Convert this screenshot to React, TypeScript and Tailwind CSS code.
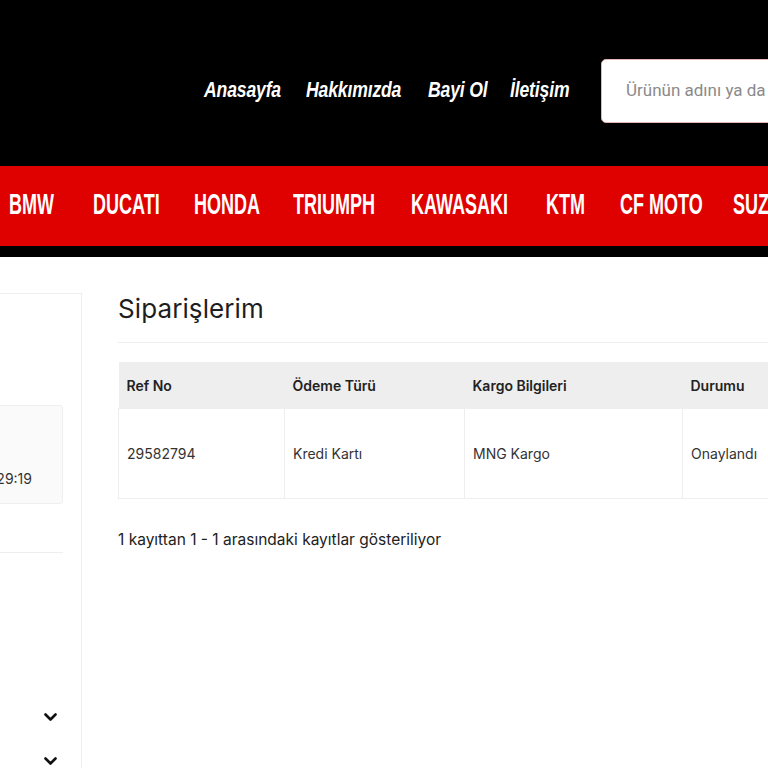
import React from "react";

const topNav = [
  { t: "Anasayfa", w: "w-[102px]" },
  { t: "Hakkımızda", w: "w-[122px]" },
  { t: "Bayi Ol", w: "w-[82px]" },
  { t: "İletişim", w: "w-[91px]" },
];

const brands = [
  { t: "BMW", w: "w-[84px]" },
  { t: "DUCATI", w: "w-[101px]" },
  { t: "HONDA", w: "w-[99px]" },
  { t: "TRIUMPH", w: "w-[118px]" },
  { t: "KAWASAKI", w: "w-[135px]" },
  { t: "KTM", w: "w-[74px]" },
  { t: "CF MOTO", w: "w-[113px]" },
  { t: "SUZUKI", w: "w-[110px]" },
];

function Chevron() {
  return (
    <svg width="13" height="9" viewBox="0 0 13 9" fill="none">
      <path d="M1.5 1.5 L6.5 6.5 L11.5 1.5" stroke="#111" strokeWidth="2.6" strokeLinecap="round" strokeLinejoin="round" />
    </svg>
  );
}

export default function App() {
  return (
    <div className="w-[768px] h-[768px] overflow-hidden bg-white font-['Inter','Liberation_Sans',sans-serif]">
      <div className="w-[1400px]">
        {/* top header */}
        <div className="h-[166px] bg-black pl-[204px] pt-[59px]">
          <div className="flex items-center h-[64px]">
            <nav className="flex items-center">
              {topNav.map((n) => (
                <div key={n.t} className={`${n.w} shrink-0`}>
                  <span className="inline-block origin-left scale-x-[0.8] text-white italic font-bold text-[22px] leading-none font-['Liberation_Sans',sans-serif] tracking-[-0.2px]">
                    {n.t}
                  </span>
                </div>
              ))}
            </nav>
            <div className="h-[64px] w-[420px] bg-white rounded-[5px] border border-[#e7b3b3] flex items-center pl-[24px]">
              <span className="text-[17px] text-[#8a8a8a] font-['Roboto','Liberation_Sans',sans-serif] whitespace-nowrap">
                Ürünün adını ya da kodunu yazınız
              </span>
            </div>
          </div>
        </div>
        {/* brand bar */}
        <div className="h-[80px] bg-[#df0000] flex items-center pl-[9px] pb-[3px]">
          {brands.map((b) => (
            <div key={b.t} className={`${b.w} shrink-0`}>
              <span className="inline-block origin-left scale-x-[0.6] text-white font-bold text-[30px] leading-none font-['Liberation_Sans',sans-serif] whitespace-nowrap">
                {b.t}
              </span>
            </div>
          ))}
        </div>
        <div className="h-[11px] bg-black" />

        {/* content */}
        <div className="flex pt-[36px] gap-[36px]">
          {/* sidebar */}
          <aside className="-ml-[200px] w-[282px] h-[520px] shrink-0 border-t border-r border-[#eeeeee] pr-[18px] flex flex-col">
            <div className="h-[111px]" />
            <div className="h-[99px] bg-[#fafafa] border border-[#efefef] rounded-[3px] flex items-end justify-end pb-[14px] pr-[30px]">
              <span className="text-[14px] text-[#333]">29:19</span>
            </div>
            <div className="h-[48px]" />
            <div className="h-px bg-[#eeeeee]" />
            <div className="h-[160px]" />
            <div className="flex justify-end pr-[6px]">
              <Chevron />
            </div>
            <div className="h-[35px]" />
            <div className="flex justify-end pr-[6px]">
              <Chevron />
            </div>
          </aside>

          {/* main */}
          <main className="w-[1000px] shrink-0">
            <h1 className="text-[26px] leading-[32px] text-[#1e1e1e] font-normal tracking-[0.1px]">Siparişlerim</h1>
            <div className="h-px bg-[#eeeeee] mt-[17px]" />
            <table className="mt-[19px] border-collapse text-[14px]">
              <thead>
                <tr className="bg-[#eeeeee] h-[46px]">
                  <th className="w-[166px] text-left font-semibold text-[#222] px-[8px] pt-[2px]">Ref No</th>
                  <th className="w-[180px] text-left font-semibold text-[#222] px-[8px] pt-[2px]">Ödeme Türü</th>
                  <th className="w-[218px] text-left font-semibold text-[#222] px-[8px] pt-[2px]">Kargo Bilgileri</th>
                  <th className="w-[200px] text-left font-semibold text-[#222] px-[8px] pt-[2px]">Durumu</th>
                </tr>
              </thead>
              <tbody>
                <tr className="h-[90px]">
                  <td className="border border-[#eeeeee] px-[8px] text-[#333]">29582794</td>
                  <td className="border border-[#eeeeee] px-[8px] text-[#333]">Kredi Kartı</td>
                  <td className="border border-[#eeeeee] px-[8px] text-[#333]">MNG Kargo</td>
                  <td className="border border-[#eeeeee] px-[8px] text-[#333]">Onaylandı</td>
                </tr>
              </tbody>
            </table>
            <p className="mt-[29px] text-[15.5px] text-[#222]">1 kayıttan 1 - 1 arasındaki kayıtlar gösteriliyor</p>
          </main>
        </div>
      </div>
    </div>
  );
}
